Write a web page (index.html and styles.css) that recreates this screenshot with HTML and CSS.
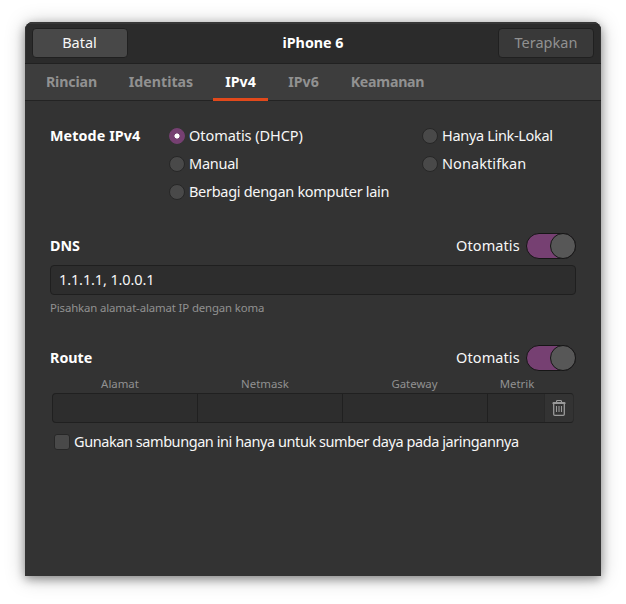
FILE: index.html
```html
<!DOCTYPE html>
<html lang="id">
<head>
<meta charset="utf-8">
<title>iPhone 6</title>
<link rel="stylesheet" href="styles.css">
</head>
<body>
<main class="window">
  <header class="headerbar">
    <button class="button cancel">Batal</button>
    <h1 class="title">iPhone 6</h1>
    <button class="button apply" disabled>Terapkan</button>
  </header>
  <nav class="tabs">
    <a class="tab details">Rincian</a>
    <a class="tab identity">Identitas</a>
    <a class="tab ipv4 active">IPv4</a>
    <a class="tab ipv6">IPv6</a>
    <a class="tab security">Keamanan</a>
  </nav>
  <div class="content">
    <section class="method">
      <h2 class="method-title">Metode IPv4</h2>
      <div class="options">
        <div class="option dhcp"><span class="radio checked"></span><span class="label">Otomatis (DHCP)</span></div>
        <div class="option link"><span class="radio"></span><span class="label">Hanya Link-Lokal</span></div>
        <div class="option manual"><span class="radio"></span><span class="label">Manual</span></div>
        <div class="option disabled"><span class="radio"></span><span class="label">Nonaktifkan</span></div>
        <div class="option shared"><span class="radio"></span><span class="label">Berbagi dengan komputer lain</span></div>
      </div>
    </section>
    <section class="dns">
      <div class="section-head">
        <h2 class="dns-title">DNS</h2>
        <span class="label auto">Otomatis</span>
        <span class="switch"></span>
      </div>
      <div class="entry"><span>1.1.1.1, 1.0.0.1</span></div>
      <p class="hint">Pisahkan alamat-alamat IP dengan koma</p>
    </section>
    <section class="route">
      <div class="section-head">
        <h2 class="route-title">Route</h2>
        <span class="label auto">Otomatis</span>
        <span class="switch"></span>
      </div>
      <div class="columns">
        <span>Alamat</span><span>Netmask</span><span>Gateway</span><span>Metrik</span>
      </div>
      <div class="cells">
        <span class="cell"></span><span class="cell"></span><span class="cell"></span><span class="cell"></span>
        <span class="delete">
          <svg width="14" height="16" viewBox="0 0 14 16" fill="none" stroke="#9a9a9a">
            <path d="M4.5 2.5v-1q0-1 1-1h3q1 0 1 1v1" stroke-width="1.1"/>
            <path d="M0.5 3q0-1 1-1h11q1 0 1 1v1H.5z" fill="#9a9a9a" stroke="none"/>
            <path d="M1.7 4v10.2q0 1.1 1.1 1.1h8.4q1.1 0 1.1-1.1V4" stroke-width="1.3"/>
            <path d="M4.5 6v6M7 6v6M9.5 6v6" stroke-width="1.1"/>
          </svg>
        </span>
      </div>
      <div class="only"><span class="checkbox"></span><span class="label">Gunakan sambungan ini hanya untuk sumber daya pada jaringannya</span></div>
    </section>
  </div>
</main>
</body>
</html>
```
FILE: styles.css
```css
*, *::after { box-sizing: border-box; }
body {
  margin: 0;
  padding: 22px 25px 28px;
  height: 604px;
  overflow: hidden;
  background: #fff;
  color: #f7f7f7;
  font: 14.5px/20px "Noto Sans", "Open Sans", sans-serif;
  white-space: nowrap;
}
h1, h2, p { margin: 0; }
h1, h2 { font-size: 14.3px; line-height: 20px; font-weight: 700; color: #fff; }
.window {
  height: 554px;
  background: #333;
  border-radius: 8px 8px 0 0;
  box-shadow: 0 3px 10px rgba(0,0,0,.36), 0 2px 20px rgba(0,0,0,.26);
  overflow: hidden;
}
.headerbar {
  height: 42px;
  padding: 0 7px;
  display: flex;
  align-items: center;
  justify-content: space-between;
  background: #2b2b2b;
  border-bottom: 1px solid #212121;
  box-shadow: inset 0 2px #373737, inset 1px 0 #343434, inset -1px 0 #343434;
}
.button {
  width: 96px;
  height: 30px;
  padding: 0 1px 2px 0;
  border: 1px solid #202020;
  border-radius: 4px;
  background: #484848;
  color: #f7f7f7;
  font: inherit;
}
.apply { padding-right: 0; background: #393939; color: #919191; }
.tabs {
  height: 37px;
  padding-left: 9px;
  display: flex;
  gap: 8px;
  background: #3d3d3d;
  border-bottom: 1px solid #232323;
}
.tab {
  height: 37px;
  width: 55px;
  padding-top: 8px;
  text-align: center;
  font-size: 14.2px;
  font-weight: 700;
  color: #919191;
}
.details { width: 75px; letter-spacing: -.12px; }
.identity { width: 88px; }
.security { width: 97px; letter-spacing: -.25px; }
.active { color: #fff; border-bottom: 3px solid #e2491b; }
.content { padding: 21px 25px 0; }
.label { padding-bottom: 2px; }
.method { display: flex; height: 84px; }
.method-title { width: 119px; padding-top: 4px; letter-spacing: .1px; }
.options { display: grid; grid-template-columns: 253px 154px; grid-auto-rows: 28px; }
.option, .only { display: flex; align-items: center; gap: 4px; }
.dhcp { letter-spacing: -.06px; }
.link { letter-spacing: -.32px; }
.manual { letter-spacing: -.25px; }
.disabled { letter-spacing: .08px; }
.shared { letter-spacing: -.3px; }
.radio {
  width: 16px;
  height: 16px;
  border: 1px solid #272727;
  border-radius: 50%;
  background: #494949;
}
.radio.checked { border-color: #764072; background: radial-gradient(circle, #fff 2.2px, #764072 2.9px); }
.dns { margin-top: 27px; height: 112px; }
.section-head { display: flex; align-items: center; height: 26px; }
.section-head h2 { flex: 1; }
.auto { width: 64px; margin-right: 6px; letter-spacing: .1px; }
.switch {
  width: 50px;
  height: 26px;
  border: 1px solid #161616;
  border-radius: 13px;
  background: #764072;
  display: flex;
  justify-content: flex-end;
}
.switch::after {
  content: "";
  width: 26px;
  height: 26px;
  margin: -1px;
  border: 1px solid #161616;
  border-radius: 50%;
  background: #575757;
}
.entry {
  height: 30px;
  margin-top: 6px;
  padding: 3px 8px;
  border: 1px solid #1f1f1f;
  border-radius: 4px;
  background: #2d2d2d;
  letter-spacing: -.12px;
}
.hint { margin-top: 5px; font-size: 11.4px; line-height: 16px; letter-spacing: -.13px; color: #919191; }
.columns, .cells { display: grid; grid-template-columns: 145px 145px 145px 58px 29px; margin: 0 2px; }
.columns {
  height: 22px;
  padding-top: 5px;
  font-size: 11.4px;
  line-height: 16px;
  color: #919191;
  text-align: center;
}
.columns span:nth-child(-n+2) { padding-right: 9px; }
.columns span:nth-child(4) { padding-left: 2px; }
.cells {
  height: 30px;
  border: 1px solid #202020;
  border-right-color: #2b2b2b;
  border-radius: 4px;
  background: #2d2d2d;
  overflow: hidden;
  grid-template-columns: 145px 145px 145px 57px 28px;
}
.cell { border-right: 1px solid #202020; }
.cell:nth-child(4) { border-right-color: #292929; }
.delete { display: flex; align-items: center; justify-content: center; background: #333; }
.only { height: 20px; margin: 9px 4px 0; letter-spacing: -.43px; }
.checkbox { width: 16px; height: 16px; border: 1px solid #272727; border-radius: 3px; background: #494949; }
```
